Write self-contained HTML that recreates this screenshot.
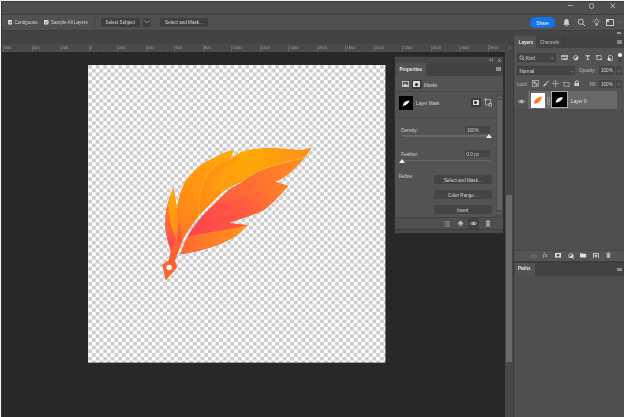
<!DOCTYPE html>
<html><head><meta charset="utf-8">
<style>
*{margin:0;padding:0;box-sizing:border-box}
html,body{width:624px;height:417px;overflow:hidden;background:#282828;font-family:"Liberation Sans",sans-serif;color:#ddd}
.a{position:absolute}
.t{position:absolute;font-size:4.6px;line-height:8px;white-space:nowrap;color:#d0d0d0}
.rl{position:absolute;top:46.4px;font-size:4px;line-height:4px;color:#a0a0a0;white-space:nowrap}
.btn{position:absolute;background:#3f3f3f;border-radius:1px;font-size:4.6px;line-height:9px;text-align:center;color:#d8d8d8;white-space:nowrap}
.ib{position:absolute;background:#d6d6d6}
#root{position:absolute;left:0;top:0;width:624px;height:417px;overflow:hidden;background:#282828;filter:blur(0.35px)}
</style></head><body><div id="root">
<!-- title bar -->
<div class="a" style="left:0;top:1px;width:624px;height:13px;background:#4e4e4e"></div>
<div class="a" style="left:0;top:14px;width:624px;height:1px;background:#3d3d3d"></div>
<!-- window controls -->
<div class="a" style="left:568px;top:5.3px;width:5.1px;height:1.2px;background:#a4a4a4"></div>
<div class="a" style="left:588.6px;top:3.1px;width:5.8px;height:5.6px;border:1.5px solid #b4b4b4;border-radius:2.6px"></div>
<svg class="a" style="left:610.3px;top:3px" width="5.6" height="5.6" viewBox="0 0 6 6"><path d="M0.5 0.5L5.5 5.5M5.5 0.5L0.5 5.5" stroke="#c8c8c8" stroke-width="1"/></svg>
<!-- options bar -->
<div class="a" style="left:0;top:15px;width:624px;height:15px;background:#505050"></div>
<div class="a" style="left:0;top:30px;width:624px;height:1px;background:#3d3d3d"></div>
<svg class="a" style="left:7.7px;top:20px" width="4.5" height="4.5" viewBox="0 0 9 9"><rect width="9" height="9" rx="1" fill="#dcdcdc"/><path d="M2 4.5L4 6.5L7.2 2.5" stroke="#444" stroke-width="1.4" fill="none"/></svg>
<div class="t" style="left:14.4px;top:19px">Contiguous</div>
<svg class="a" style="left:44px;top:20px" width="4.5" height="4.5" viewBox="0 0 9 9"><rect width="9" height="9" rx="1" fill="#dcdcdc"/><path d="M2 4.5L4 6.5L7.2 2.5" stroke="#444" stroke-width="1.4" fill="none"/></svg>
<div class="t" style="left:51px;top:19px">Sample All Layers</div>
<div class="a" style="left:94px;top:16px;width:1px;height:13px;background:#454545"></div>
<div class="btn" style="left:100.5px;top:17.6px;width:39.5px;height:9px">Select Subject</div>
<div class="btn" style="left:143px;top:17.6px;width:7.5px;height:9px"></div>
<svg class="a" style="left:143.8px;top:19.8px" width="6.2" height="3.6" viewBox="0 0 6.2 3.6"><path d="M0.5 0.6L3.1 3L5.7 0.6" stroke="#a8a8a8" stroke-width="0.8" fill="none"/></svg>
<div class="btn" style="left:160px;top:17.6px;width:48px;height:9px">Select and Mask...</div>
<!-- share & icons -->
<div class="a" style="left:530.3px;top:16.5px;width:24.7px;height:11.2px;background:#1473e6;border-radius:5.6px;color:#fff;font-size:4.8px;line-height:13px;text-align:center">Share</div>
<svg class="a" style="left:562px;top:18px" width="9" height="9" viewBox="0 0 9 9"><path d="M4.5 1C3 1 2.3 2.2 2.3 3.5L2.3 5.5L1.3 6.8L7.7 6.8L6.7 5.5L6.7 3.5C6.7 2.2 6 1 4.5 1Z" fill="#d0d0d0"/><rect x="3.6" y="7.2" width="1.8" height="1" fill="#d0d0d0"/></svg>
<svg class="a" style="left:576.5px;top:18px" width="9" height="9" viewBox="0 0 9 9"><circle cx="3.8" cy="3.8" r="2.6" stroke="#d0d0d0" stroke-width="0.9" fill="none"/><path d="M5.7 5.7L8 8" stroke="#d0d0d0" stroke-width="1"/></svg>
<svg class="a" style="left:592px;top:17px" width="9" height="10" viewBox="0 0 9 10"><path d="M4.5 2.5C3.3 2.5 2.6 3.4 2.6 4.4C2.6 5.3 3.3 5.8 3.5 6.6L5.5 6.6C5.7 5.8 6.4 5.3 6.4 4.4C6.4 3.4 5.7 2.5 4.5 2.5Z" stroke="#d0d0d0" stroke-width="0.7" fill="none"/><rect x="3.6" y="7" width="1.8" height="1.5" fill="#d8d8d8"/><path d="M4.5 0.5V1.6M1 2L1.8 2.7M8 2L7.2 2.7M0.3 4.6H1.4M7.6 4.6H8.7" stroke="#c0c0c0" stroke-width="0.5"/></svg>
<div class="a" style="left:606px;top:18.5px;width:8px;height:7px;border:1px solid #c8c8c8"></div>
<div class="a" style="left:607px;top:19.5px;width:2px;height:2px;background:#c8c8c8"></div>
<svg class="a" style="left:618px;top:20px" width="5" height="4" viewBox="0 0 5 4"><path d="M0.5 1L2.5 3L4.5 1" stroke="#888" stroke-width="0.7" fill="none"/></svg>
<!-- doc tab bar -->
<div class="a" style="left:0;top:31px;width:513px;height:13px;background:#434343"></div>
<!-- ruler -->
<div class="a" style="left:0;top:44px;width:505px;height:8px;background:#494949"></div>
<div class="a" style="left:3.2px;top:44.5px;width:0.8px;height:7.5px;background:#666666"></div>
<div class="rl" style="left:4.5px">600</div>
<div class="a" style="left:6.8px;top:50.3px;width:0.7px;height:1.2px;background:#5a5a5a"></div>
<div class="a" style="left:10.3px;top:50.3px;width:0.7px;height:1.2px;background:#5a5a5a"></div>
<div class="a" style="left:13.9px;top:50.3px;width:0.7px;height:1.2px;background:#5a5a5a"></div>
<div class="a" style="left:17.5px;top:49.5px;width:0.7px;height:2.0px;background:#5a5a5a"></div>
<div class="a" style="left:21.0px;top:50.3px;width:0.7px;height:1.2px;background:#5a5a5a"></div>
<div class="a" style="left:24.6px;top:50.3px;width:0.7px;height:1.2px;background:#5a5a5a"></div>
<div class="a" style="left:28.1px;top:50.3px;width:0.7px;height:1.2px;background:#5a5a5a"></div>
<div class="a" style="left:31.7px;top:44.5px;width:0.8px;height:7.5px;background:#666666"></div>
<div class="rl" style="left:33.0px">400</div>
<div class="a" style="left:35.3px;top:50.3px;width:0.7px;height:1.2px;background:#5a5a5a"></div>
<div class="a" style="left:38.8px;top:50.3px;width:0.7px;height:1.2px;background:#5a5a5a"></div>
<div class="a" style="left:42.4px;top:50.3px;width:0.7px;height:1.2px;background:#5a5a5a"></div>
<div class="a" style="left:46.0px;top:49.5px;width:0.7px;height:2.0px;background:#5a5a5a"></div>
<div class="a" style="left:49.5px;top:50.3px;width:0.7px;height:1.2px;background:#5a5a5a"></div>
<div class="a" style="left:53.1px;top:50.3px;width:0.7px;height:1.2px;background:#5a5a5a"></div>
<div class="a" style="left:56.6px;top:50.3px;width:0.7px;height:1.2px;background:#5a5a5a"></div>
<div class="a" style="left:60.2px;top:44.5px;width:0.8px;height:7.5px;background:#666666"></div>
<div class="rl" style="left:61.5px">200</div>
<div class="a" style="left:63.8px;top:50.3px;width:0.7px;height:1.2px;background:#5a5a5a"></div>
<div class="a" style="left:67.3px;top:50.3px;width:0.7px;height:1.2px;background:#5a5a5a"></div>
<div class="a" style="left:70.9px;top:50.3px;width:0.7px;height:1.2px;background:#5a5a5a"></div>
<div class="a" style="left:74.5px;top:49.5px;width:0.7px;height:2.0px;background:#5a5a5a"></div>
<div class="a" style="left:78.0px;top:50.3px;width:0.7px;height:1.2px;background:#5a5a5a"></div>
<div class="a" style="left:81.6px;top:50.3px;width:0.7px;height:1.2px;background:#5a5a5a"></div>
<div class="a" style="left:85.1px;top:50.3px;width:0.7px;height:1.2px;background:#5a5a5a"></div>
<div class="a" style="left:88.7px;top:44.5px;width:0.8px;height:7.5px;background:#666666"></div>
<div class="rl" style="left:90.0px">0</div>
<div class="a" style="left:92.3px;top:50.3px;width:0.7px;height:1.2px;background:#5a5a5a"></div>
<div class="a" style="left:95.8px;top:50.3px;width:0.7px;height:1.2px;background:#5a5a5a"></div>
<div class="a" style="left:99.4px;top:50.3px;width:0.7px;height:1.2px;background:#5a5a5a"></div>
<div class="a" style="left:103.0px;top:49.5px;width:0.7px;height:2.0px;background:#5a5a5a"></div>
<div class="a" style="left:106.5px;top:50.3px;width:0.7px;height:1.2px;background:#5a5a5a"></div>
<div class="a" style="left:110.1px;top:50.3px;width:0.7px;height:1.2px;background:#5a5a5a"></div>
<div class="a" style="left:113.6px;top:50.3px;width:0.7px;height:1.2px;background:#5a5a5a"></div>
<div class="a" style="left:117.2px;top:44.5px;width:0.8px;height:7.5px;background:#666666"></div>
<div class="rl" style="left:118.5px">200</div>
<div class="a" style="left:120.8px;top:50.3px;width:0.7px;height:1.2px;background:#5a5a5a"></div>
<div class="a" style="left:124.3px;top:50.3px;width:0.7px;height:1.2px;background:#5a5a5a"></div>
<div class="a" style="left:127.9px;top:50.3px;width:0.7px;height:1.2px;background:#5a5a5a"></div>
<div class="a" style="left:131.4px;top:49.5px;width:0.7px;height:2.0px;background:#5a5a5a"></div>
<div class="a" style="left:135.0px;top:50.3px;width:0.7px;height:1.2px;background:#5a5a5a"></div>
<div class="a" style="left:138.6px;top:50.3px;width:0.7px;height:1.2px;background:#5a5a5a"></div>
<div class="a" style="left:142.1px;top:50.3px;width:0.7px;height:1.2px;background:#5a5a5a"></div>
<div class="a" style="left:145.7px;top:44.5px;width:0.8px;height:7.5px;background:#666666"></div>
<div class="rl" style="left:147.0px">400</div>
<div class="a" style="left:149.3px;top:50.3px;width:0.7px;height:1.2px;background:#5a5a5a"></div>
<div class="a" style="left:152.8px;top:50.3px;width:0.7px;height:1.2px;background:#5a5a5a"></div>
<div class="a" style="left:156.4px;top:50.3px;width:0.7px;height:1.2px;background:#5a5a5a"></div>
<div class="a" style="left:159.9px;top:49.5px;width:0.7px;height:2.0px;background:#5a5a5a"></div>
<div class="a" style="left:163.5px;top:50.3px;width:0.7px;height:1.2px;background:#5a5a5a"></div>
<div class="a" style="left:167.1px;top:50.3px;width:0.7px;height:1.2px;background:#5a5a5a"></div>
<div class="a" style="left:170.6px;top:50.3px;width:0.7px;height:1.2px;background:#5a5a5a"></div>
<div class="a" style="left:174.2px;top:44.5px;width:0.8px;height:7.5px;background:#666666"></div>
<div class="rl" style="left:175.5px">600</div>
<div class="a" style="left:177.8px;top:50.3px;width:0.7px;height:1.2px;background:#5a5a5a"></div>
<div class="a" style="left:181.3px;top:50.3px;width:0.7px;height:1.2px;background:#5a5a5a"></div>
<div class="a" style="left:184.9px;top:50.3px;width:0.7px;height:1.2px;background:#5a5a5a"></div>
<div class="a" style="left:188.4px;top:49.5px;width:0.7px;height:2.0px;background:#5a5a5a"></div>
<div class="a" style="left:192.0px;top:50.3px;width:0.7px;height:1.2px;background:#5a5a5a"></div>
<div class="a" style="left:195.6px;top:50.3px;width:0.7px;height:1.2px;background:#5a5a5a"></div>
<div class="a" style="left:199.1px;top:50.3px;width:0.7px;height:1.2px;background:#5a5a5a"></div>
<div class="a" style="left:202.7px;top:44.5px;width:0.8px;height:7.5px;background:#666666"></div>
<div class="rl" style="left:204.0px">800</div>
<div class="a" style="left:206.3px;top:50.3px;width:0.7px;height:1.2px;background:#5a5a5a"></div>
<div class="a" style="left:209.8px;top:50.3px;width:0.7px;height:1.2px;background:#5a5a5a"></div>
<div class="a" style="left:213.4px;top:50.3px;width:0.7px;height:1.2px;background:#5a5a5a"></div>
<div class="a" style="left:216.9px;top:49.5px;width:0.7px;height:2.0px;background:#5a5a5a"></div>
<div class="a" style="left:220.5px;top:50.3px;width:0.7px;height:1.2px;background:#5a5a5a"></div>
<div class="a" style="left:224.1px;top:50.3px;width:0.7px;height:1.2px;background:#5a5a5a"></div>
<div class="a" style="left:227.6px;top:50.3px;width:0.7px;height:1.2px;background:#5a5a5a"></div>
<div class="a" style="left:231.2px;top:44.5px;width:0.8px;height:7.5px;background:#666666"></div>
<div class="rl" style="left:232.5px">1000</div>
<div class="a" style="left:234.8px;top:50.3px;width:0.7px;height:1.2px;background:#5a5a5a"></div>
<div class="a" style="left:238.3px;top:50.3px;width:0.7px;height:1.2px;background:#5a5a5a"></div>
<div class="a" style="left:241.9px;top:50.3px;width:0.7px;height:1.2px;background:#5a5a5a"></div>
<div class="a" style="left:245.4px;top:49.5px;width:0.7px;height:2.0px;background:#5a5a5a"></div>
<div class="a" style="left:249.0px;top:50.3px;width:0.7px;height:1.2px;background:#5a5a5a"></div>
<div class="a" style="left:252.6px;top:50.3px;width:0.7px;height:1.2px;background:#5a5a5a"></div>
<div class="a" style="left:256.1px;top:50.3px;width:0.7px;height:1.2px;background:#5a5a5a"></div>
<div class="a" style="left:259.7px;top:44.5px;width:0.8px;height:7.5px;background:#666666"></div>
<div class="rl" style="left:261.0px">1200</div>
<div class="a" style="left:263.3px;top:50.3px;width:0.7px;height:1.2px;background:#5a5a5a"></div>
<div class="a" style="left:266.8px;top:50.3px;width:0.7px;height:1.2px;background:#5a5a5a"></div>
<div class="a" style="left:270.4px;top:50.3px;width:0.7px;height:1.2px;background:#5a5a5a"></div>
<div class="a" style="left:273.9px;top:49.5px;width:0.7px;height:2.0px;background:#5a5a5a"></div>
<div class="a" style="left:277.5px;top:50.3px;width:0.7px;height:1.2px;background:#5a5a5a"></div>
<div class="a" style="left:281.1px;top:50.3px;width:0.7px;height:1.2px;background:#5a5a5a"></div>
<div class="a" style="left:284.6px;top:50.3px;width:0.7px;height:1.2px;background:#5a5a5a"></div>
<div class="a" style="left:288.2px;top:44.5px;width:0.8px;height:7.5px;background:#666666"></div>
<div class="rl" style="left:289.5px">1400</div>
<div class="a" style="left:291.8px;top:50.3px;width:0.7px;height:1.2px;background:#5a5a5a"></div>
<div class="a" style="left:295.3px;top:50.3px;width:0.7px;height:1.2px;background:#5a5a5a"></div>
<div class="a" style="left:298.9px;top:50.3px;width:0.7px;height:1.2px;background:#5a5a5a"></div>
<div class="a" style="left:302.4px;top:49.5px;width:0.7px;height:2.0px;background:#5a5a5a"></div>
<div class="a" style="left:306.0px;top:50.3px;width:0.7px;height:1.2px;background:#5a5a5a"></div>
<div class="a" style="left:309.6px;top:50.3px;width:0.7px;height:1.2px;background:#5a5a5a"></div>
<div class="a" style="left:313.1px;top:50.3px;width:0.7px;height:1.2px;background:#5a5a5a"></div>
<div class="a" style="left:316.7px;top:44.5px;width:0.8px;height:7.5px;background:#666666"></div>
<div class="rl" style="left:318.0px">1600</div>
<div class="a" style="left:320.3px;top:50.3px;width:0.7px;height:1.2px;background:#5a5a5a"></div>
<div class="a" style="left:323.8px;top:50.3px;width:0.7px;height:1.2px;background:#5a5a5a"></div>
<div class="a" style="left:327.4px;top:50.3px;width:0.7px;height:1.2px;background:#5a5a5a"></div>
<div class="a" style="left:330.9px;top:49.5px;width:0.7px;height:2.0px;background:#5a5a5a"></div>
<div class="a" style="left:334.5px;top:50.3px;width:0.7px;height:1.2px;background:#5a5a5a"></div>
<div class="a" style="left:338.1px;top:50.3px;width:0.7px;height:1.2px;background:#5a5a5a"></div>
<div class="a" style="left:341.6px;top:50.3px;width:0.7px;height:1.2px;background:#5a5a5a"></div>
<div class="a" style="left:345.2px;top:44.5px;width:0.8px;height:7.5px;background:#666666"></div>
<div class="rl" style="left:346.5px">1800</div>
<div class="a" style="left:348.8px;top:50.3px;width:0.7px;height:1.2px;background:#5a5a5a"></div>
<div class="a" style="left:352.3px;top:50.3px;width:0.7px;height:1.2px;background:#5a5a5a"></div>
<div class="a" style="left:355.9px;top:50.3px;width:0.7px;height:1.2px;background:#5a5a5a"></div>
<div class="a" style="left:359.4px;top:49.5px;width:0.7px;height:2.0px;background:#5a5a5a"></div>
<div class="a" style="left:363.0px;top:50.3px;width:0.7px;height:1.2px;background:#5a5a5a"></div>
<div class="a" style="left:366.6px;top:50.3px;width:0.7px;height:1.2px;background:#5a5a5a"></div>
<div class="a" style="left:370.1px;top:50.3px;width:0.7px;height:1.2px;background:#5a5a5a"></div>
<div class="a" style="left:373.7px;top:44.5px;width:0.8px;height:7.5px;background:#666666"></div>
<div class="rl" style="left:375.0px">2000</div>
<div class="a" style="left:377.3px;top:50.3px;width:0.7px;height:1.2px;background:#5a5a5a"></div>
<div class="a" style="left:380.8px;top:50.3px;width:0.7px;height:1.2px;background:#5a5a5a"></div>
<div class="a" style="left:384.4px;top:50.3px;width:0.7px;height:1.2px;background:#5a5a5a"></div>
<div class="a" style="left:387.9px;top:49.5px;width:0.7px;height:2.0px;background:#5a5a5a"></div>
<div class="a" style="left:391.5px;top:50.3px;width:0.7px;height:1.2px;background:#5a5a5a"></div>
<div class="a" style="left:395.1px;top:50.3px;width:0.7px;height:1.2px;background:#5a5a5a"></div>
<div class="a" style="left:398.6px;top:50.3px;width:0.7px;height:1.2px;background:#5a5a5a"></div>
<div class="a" style="left:402.2px;top:44.5px;width:0.8px;height:7.5px;background:#666666"></div>
<div class="rl" style="left:403.5px">2200</div>
<div class="a" style="left:405.8px;top:50.3px;width:0.7px;height:1.2px;background:#5a5a5a"></div>
<div class="a" style="left:409.3px;top:50.3px;width:0.7px;height:1.2px;background:#5a5a5a"></div>
<div class="a" style="left:412.9px;top:50.3px;width:0.7px;height:1.2px;background:#5a5a5a"></div>
<div class="a" style="left:416.4px;top:49.5px;width:0.7px;height:2.0px;background:#5a5a5a"></div>
<div class="a" style="left:420.0px;top:50.3px;width:0.7px;height:1.2px;background:#5a5a5a"></div>
<div class="a" style="left:423.6px;top:50.3px;width:0.7px;height:1.2px;background:#5a5a5a"></div>
<div class="a" style="left:427.1px;top:50.3px;width:0.7px;height:1.2px;background:#5a5a5a"></div>
<div class="a" style="left:430.7px;top:44.5px;width:0.8px;height:7.5px;background:#666666"></div>
<div class="rl" style="left:432.0px">2400</div>
<div class="a" style="left:434.3px;top:50.3px;width:0.7px;height:1.2px;background:#5a5a5a"></div>
<div class="a" style="left:437.8px;top:50.3px;width:0.7px;height:1.2px;background:#5a5a5a"></div>
<div class="a" style="left:441.4px;top:50.3px;width:0.7px;height:1.2px;background:#5a5a5a"></div>
<div class="a" style="left:444.9px;top:49.5px;width:0.7px;height:2.0px;background:#5a5a5a"></div>
<div class="a" style="left:448.5px;top:50.3px;width:0.7px;height:1.2px;background:#5a5a5a"></div>
<div class="a" style="left:452.1px;top:50.3px;width:0.7px;height:1.2px;background:#5a5a5a"></div>
<div class="a" style="left:455.6px;top:50.3px;width:0.7px;height:1.2px;background:#5a5a5a"></div>
<div class="a" style="left:459.2px;top:44.5px;width:0.8px;height:7.5px;background:#666666"></div>
<div class="rl" style="left:460.5px">2600</div>
<div class="a" style="left:462.8px;top:50.3px;width:0.7px;height:1.2px;background:#5a5a5a"></div>
<div class="a" style="left:466.3px;top:50.3px;width:0.7px;height:1.2px;background:#5a5a5a"></div>
<div class="a" style="left:469.9px;top:50.3px;width:0.7px;height:1.2px;background:#5a5a5a"></div>
<div class="a" style="left:473.4px;top:49.5px;width:0.7px;height:2.0px;background:#5a5a5a"></div>
<div class="a" style="left:477.0px;top:50.3px;width:0.7px;height:1.2px;background:#5a5a5a"></div>
<div class="a" style="left:480.6px;top:50.3px;width:0.7px;height:1.2px;background:#5a5a5a"></div>
<div class="a" style="left:484.1px;top:50.3px;width:0.7px;height:1.2px;background:#5a5a5a"></div>
<div class="a" style="left:487.7px;top:44.5px;width:0.8px;height:7.5px;background:#666666"></div>
<div class="rl" style="left:489.0px">2800</div>
<div class="a" style="left:491.3px;top:50.3px;width:0.7px;height:1.2px;background:#5a5a5a"></div>
<div class="a" style="left:494.8px;top:50.3px;width:0.7px;height:1.2px;background:#5a5a5a"></div>
<div class="a" style="left:498.4px;top:50.3px;width:0.7px;height:1.2px;background:#5a5a5a"></div>
<div class="a" style="left:501.9px;top:49.5px;width:0.7px;height:2.0px;background:#5a5a5a"></div>
<!-- canvas bg -->
<div class="a" style="left:0;top:52px;width:505px;height:365px;background:#282828"></div>
<!-- checker canvas -->
<svg class="a" style="left:88.4px;top:65.2px" width="297.4" height="297.6" viewBox="0 0 297.4 297.6">
<defs><pattern id="ck" width="7.48" height="7.48" patternUnits="userSpaceOnUse" patternTransform="translate(0.3 0.1)"><rect width="7.48" height="7.48" fill="#fff"/><rect width="3.74" height="3.74" fill="#cccccc"/><rect x="3.74" y="3.74" width="3.74" height="3.74" fill="#cccccc"/></pattern></defs>
<rect width="297.4" height="297.6" fill="url(#ck)"/>
</svg>
<!-- feather -->
<svg class="a" style="left:0;top:0" width="624" height="417" viewBox="0 0 624 417">
<defs>
<linearGradient id="gS" x1="172" y1="255" x2="238" y2="150" gradientUnits="userSpaceOnUse"><stop offset="0" stop-color="#ff6a32"/><stop offset="0.4" stop-color="#ff8c16"/><stop offset="0.75" stop-color="#ff9e0c"/><stop offset="1" stop-color="#ffae04"/></linearGradient>
<radialGradient id="gT" cx="242" cy="150" r="72" gradientUnits="userSpaceOnUse"><stop offset="0" stop-color="#ffac04"/><stop offset="0.45" stop-color="#ffa00c"/><stop offset="1" stop-color="#ff8c1a"/></radialGradient>
<linearGradient id="gL" x1="200" y1="232" x2="290" y2="186" gradientUnits="userSpaceOnUse"><stop offset="0" stop-color="#ff464c"/><stop offset="0.5" stop-color="#ff5a40"/><stop offset="1" stop-color="#ff8a20"/></linearGradient>
<linearGradient id="gU" x1="215" y1="200" x2="300" y2="165" gradientUnits="userSpaceOnUse"><stop offset="0" stop-color="#ff5a3e"/><stop offset="0.5" stop-color="#ff7230"/><stop offset="1" stop-color="#ff8a22"/></linearGradient>
<linearGradient id="gB" x1="185" y1="250" x2="248" y2="226" gradientUnits="userSpaceOnUse"><stop offset="0" stop-color="#ff6a32"/><stop offset="1" stop-color="#ff9a16"/></linearGradient>
<linearGradient id="gK" x1="172" y1="195" x2="170" y2="250" gradientUnits="userSpaceOnUse"><stop offset="0" stop-color="#ff8a20"/><stop offset="0.5" stop-color="#ff6a36"/><stop offset="1" stop-color="#ff4252"/></linearGradient>
<linearGradient id="gKi" x1="173" y1="190" x2="176" y2="240" gradientUnits="userSpaceOnUse"><stop offset="0" stop-color="#ffa806"/><stop offset="0.6" stop-color="#ff9a12"/><stop offset="1" stop-color="#ff8a1c"/></linearGradient>
<mask id="gapm" maskUnits="userSpaceOnUse" x="0" y="0" width="624" height="417"><rect width="624" height="417" fill="#fff"/><path d="M179.38 256.41 L179.45 256.22 L179.52 256.01 L179.61 255.76 L179.70 255.48 L179.81 255.18 L179.92 254.85 L180.04 254.49 L180.17 254.12 L180.31 253.72 L180.46 253.31 L180.61 252.87 L180.78 252.42 L180.95 251.95 L181.11 251.46 L181.29 250.96 L181.46 250.45 L181.64 249.92 L181.84 249.37 L182.04 248.79 L182.26 248.19 L182.50 247.57 L182.76 246.91 L183.04 246.22 L183.35 245.49 L183.69 244.71 L184.06 243.86 L184.45 242.96 L184.86 242.02 L185.29 241.06 L185.73 240.08 L186.19 239.10 L186.65 238.11 L187.13 237.15 L187.61 236.20 L188.10 235.29 L188.58 234.42 L189.07 233.59 L189.57 232.78 L190.08 231.99 L190.59 231.22 L191.12 230.45 L191.66 229.69 L192.21 228.93 L192.78 228.16 L193.36 227.38 L193.95 226.59 L194.57 225.79 L195.20 224.96 L195.84 224.10 L196.51 223.23 L197.20 222.34 L197.91 221.44 L198.62 220.53 L199.35 219.62 L200.08 218.72 L200.82 217.82 L201.55 216.94 L202.29 216.08 L203.01 215.24 L203.73 214.44 L204.44 213.67 L205.15 212.92 L205.86 212.19 L206.58 211.47 L207.30 210.77 L208.02 210.07 L208.75 209.38 L209.47 208.69 L210.20 208.00 L210.93 207.31 L211.65 206.60 L212.38 205.89 L213.10 205.17 L213.82 204.44 L214.54 203.71 L215.26 202.98 L215.97 202.25 L216.68 201.53 L217.39 200.81 L218.10 200.10 L218.79 199.41 L219.49 198.72 L220.18 198.06 L220.86 197.41 L221.54 196.77 L222.23 196.13 L222.91 195.50 L223.58 194.87 L224.24 194.24 L224.87 193.61 L225.51 193.00 L226.13 192.40 L226.75 191.83 L227.36 191.27 L227.97 190.75 L228.56 190.25 L229.14 189.78 L229.71 189.33 L230.28 188.91 L230.85 188.52 L231.40 188.14 L231.96 187.77 L232.51 187.42 L233.06 187.08 L233.61 186.75 L234.16 186.42 L234.70 186.10 L235.25 185.78 L235.81 185.46 L236.39 185.14 L237.00 184.82 L237.61 184.51 L238.22 184.20 L238.82 183.91 L239.40 183.63 L239.94 183.37 L240.44 183.13 L240.89 182.92 L241.27 182.73 L241.58 182.58 L241.42 182.22 L241.10 182.34 L240.71 182.48 L240.24 182.65 L239.72 182.84 L239.16 183.05 L238.55 183.27 L237.92 183.51 L237.28 183.75 L236.63 184.01 L235.98 184.28 L235.35 184.55 L234.75 184.82 L234.17 185.09 L233.59 185.36 L233.01 185.64 L232.42 185.92 L231.83 186.21 L231.23 186.52 L230.62 186.84 L230.01 187.17 L229.38 187.53 L228.75 187.91 L228.10 188.32 L227.44 188.75 L226.77 189.21 L226.10 189.70 L225.41 190.21 L224.72 190.74 L224.02 191.29 L223.31 191.85 L222.60 192.43 L221.90 193.03 L221.21 193.66 L220.52 194.30 L219.83 194.94 L219.14 195.59 L218.44 196.25 L217.74 196.93 L217.04 197.63 L216.33 198.34 L215.62 199.05 L214.90 199.77 L214.19 200.50 L213.47 201.23 L212.76 201.96 L212.05 202.68 L211.33 203.40 L210.62 204.11 L209.91 204.81 L209.19 205.50 L208.47 206.19 L207.75 206.88 L207.02 207.57 L206.29 208.27 L205.56 208.97 L204.82 209.69 L204.08 210.43 L203.35 211.18 L202.61 211.96 L201.87 212.76 L201.13 213.59 L200.39 214.45 L199.64 215.33 L198.89 216.22 L198.14 217.14 L197.40 218.05 L196.66 218.98 L195.94 219.89 L195.23 220.81 L194.53 221.71 L193.86 222.59 L193.20 223.44 L192.57 224.27 L191.96 225.09 L191.36 225.88 L190.77 226.67 L190.19 227.45 L189.63 228.24 L189.07 229.02 L188.52 229.82 L187.99 230.63 L187.46 231.45 L186.93 232.30 L186.42 233.18 L185.90 234.09 L185.40 235.05 L184.90 236.03 L184.40 237.03 L183.92 238.03 L183.46 239.04 L183.01 240.04 L182.57 241.01 L182.16 241.96 L181.76 242.86 L181.40 243.71 L181.05 244.51 L180.73 245.26 L180.44 245.98 L180.17 246.66 L179.92 247.32 L179.69 247.94 L179.48 248.53 L179.28 249.10 L179.09 249.64 L178.92 250.16 L178.75 250.65 L178.59 251.12 L178.42 251.58 L178.26 252.03 L178.10 252.47 L177.95 252.89 L177.81 253.29 L177.68 253.67 L177.56 254.03 L177.44 254.36 L177.34 254.67 L177.24 254.95 L177.16 255.19 L177.08 255.41 L177.02 255.59Z" fill="#000"/></mask>
<clipPath id="trlclip"><path d="M230.0 159.6 C231.3 158.7 235.2 155.4 238.0 153.9 C240.8 152.4 242.8 151.2 246.6 150.3 C250.4 149.4 256.2 148.8 261.0 148.4 C265.8 148.1 270.7 148.0 275.5 148.2 C280.3 148.3 285.7 149.0 290.0 149.3 C294.3 149.6 297.9 150.2 301.5 150.0 C305.1 149.8 309.9 148.2 311.6 147.8 C310.9 148.8 308.5 152.3 307.3 153.9 C306.1 155.5 305.0 156.7 304.5 157.3 C303.2 157.7 300.6 158.7 297.0 159.6 C293.4 160.5 288.7 161.1 282.7 162.8 C276.7 164.5 267.0 167.2 261.0 169.7 C255.0 172.2 249.8 175.9 246.6 178.0 C243.3 180.1 244.6 180.5 241.5 182.4 C238.4 184.3 231.6 187.2 228.0 189.5 C224.4 191.8 223.0 193.8 220.0 196.5 C217.0 199.2 213.6 202.4 210.0 206.0 C206.4 209.6 200.4 216.0 198.5 218.0 C198.5 216.2 198.2 211.2 198.5 207.0 C198.8 202.8 198.9 197.7 200.0 193.0 C201.1 188.3 203.0 183.0 205.0 179.0 C207.0 175.0 209.5 171.8 212.0 169.0 C214.5 166.2 217.0 163.6 220.0 162.0 C223.0 160.4 228.3 160.0 230.0 159.6Z"/></clipPath>
<filter id="fb" x="-20%" y="-20%" width="140%" height="140%"><feGaussianBlur stdDeviation="2"/></filter>
</defs>
<g mask="url(#gapm)">
<path d="M311.6 147.8 C310.9 148.8 309.2 151.5 307.3 153.9 C305.4 156.3 302.9 159.4 300.0 162.5 C297.1 165.6 293.2 169.8 290.0 172.6 C286.8 175.3 283.5 177.5 281.0 179.0 C278.5 180.5 275.9 181.3 274.9 181.8 C277.1 182.5 286.1 185.4 288.4 186.1 C287.3 187.2 284.7 190.2 282.0 193.0 C279.3 195.8 275.7 199.8 272.0 203.0 C268.3 206.2 267.2 208.7 260.0 212.0 C252.8 215.3 234.2 221.2 229.0 223.0 C232.1 223.4 244.6 224.8 247.7 225.2 C245.6 227.0 240.3 232.8 235.4 236.0 C230.5 239.2 224.2 242.2 218.2 244.6 C212.2 247.0 205.8 248.8 199.5 250.4 C193.2 252.0 183.3 253.7 180.1 254.3 C179.4 254.0 176.7 252.8 176.0 252.5 C175.2 252.2 171.8 251.1 170.9 250.8 C170.4 249.2 168.9 245.0 168.0 241.5 C167.1 238.0 166.0 233.5 165.6 230.0 C165.2 226.5 165.2 223.8 165.4 220.3 C165.6 216.8 165.8 212.4 166.5 208.8 C167.2 205.2 168.3 202.1 169.4 198.7 C170.5 195.2 172.7 189.9 173.3 188.1 C173.6 189.7 174.4 193.8 175.0 197.5 C175.6 201.2 176.5 207.9 176.8 210.0 C177.0 208.6 177.3 204.9 178.0 201.8 C178.7 198.8 179.6 195.0 180.8 191.7 C182.0 188.3 183.2 184.8 185.1 181.7 C187.0 178.6 189.7 175.8 192.3 173.0 C195.0 170.2 197.6 167.5 201.0 165.1 C204.4 162.7 208.4 160.8 212.5 158.6 C216.6 156.4 222.2 153.3 225.8 151.9 C229.4 150.5 232.9 150.4 234.3 150.1 C233.6 151.7 230.7 158.0 230.0 159.6 C231.3 158.7 235.2 155.4 238.0 153.9 C240.8 152.4 242.8 151.2 246.6 150.3 C250.4 149.4 256.2 148.8 261.0 148.4 C265.8 148.1 270.7 148.0 275.5 148.2 C280.3 148.3 285.7 149.0 290.0 149.3 C294.3 149.6 297.9 150.2 301.5 150.0 C305.1 149.8 309.9 148.2 311.6 147.8Z" fill="url(#gS)"/>
<path d="M230.0 159.6 C231.3 158.7 235.2 155.4 238.0 153.9 C240.8 152.4 242.8 151.2 246.6 150.3 C250.4 149.4 256.2 148.8 261.0 148.4 C265.8 148.1 270.7 148.0 275.5 148.2 C280.3 148.3 285.7 149.0 290.0 149.3 C294.3 149.6 297.9 150.2 301.5 150.0 C305.1 149.8 309.9 148.2 311.6 147.8 C310.9 148.8 308.5 152.3 307.3 153.9 C306.1 155.5 305.0 156.7 304.5 157.3 C303.2 157.7 300.6 158.7 297.0 159.6 C293.4 160.5 288.7 161.1 282.7 162.8 C276.7 164.5 267.0 167.2 261.0 169.7 C255.0 172.2 249.8 175.9 246.6 178.0 C243.3 180.1 244.6 180.5 241.5 182.4 C238.4 184.3 231.6 187.2 228.0 189.5 C224.4 191.8 223.0 193.8 220.0 196.5 C217.0 199.2 213.6 202.4 210.0 206.0 C206.4 209.6 200.4 216.0 198.5 218.0 C198.5 216.2 198.2 211.2 198.5 207.0 C198.8 202.8 198.9 197.7 200.0 193.0 C201.1 188.3 203.0 183.0 205.0 179.0 C207.0 175.0 209.5 171.8 212.0 169.0 C214.5 166.2 217.0 163.6 220.0 162.0 C223.0 160.4 228.3 160.0 230.0 159.6Z" fill="url(#gT)"/>
<g clip-path="url(#trlclip)"><path d="M236.0 158.0 C234.0 159.0 227.5 161.8 224.0 164.0 C220.5 166.2 217.6 168.2 215.0 171.0 C212.4 173.8 210.2 177.2 208.5 181.0 C206.8 184.8 205.4 189.7 204.5 194.0 C203.6 198.3 203.2 202.7 203.0 207.0 C202.8 211.3 203.0 217.8 203.0 220.0" stroke="#ff8a12" stroke-width="7" fill="none" opacity="0.55" filter="url(#fb)"/></g>
<path d="M230.0 159.6 C228.3 160.0 223.0 160.4 220.0 162.0 C217.0 163.6 214.5 166.2 212.0 169.0 C209.5 171.8 207.0 175.0 205.0 179.0 C203.0 183.0 201.1 188.3 200.0 193.0 C198.9 197.7 198.8 202.8 198.5 207.0 C198.2 211.2 198.5 216.2 198.5 218.0" stroke="#ffb422" stroke-width="0.9" fill="none" opacity="0.8"/>
<path d="M173.3 188.1 C173.6 189.7 174.4 193.8 175.0 197.5 C175.6 201.2 176.1 205.9 176.8 210.0 C177.5 214.1 178.4 217.8 179.3 222.0 C180.2 226.2 181.8 232.8 182.3 235.0 C181.6 236.8 178.7 244.2 178.0 246.0 C176.8 246.8 172.1 250.0 170.9 250.8 C170.4 249.2 168.9 245.0 168.0 241.5 C167.1 238.0 166.0 233.5 165.6 230.0 C165.2 226.5 165.2 223.8 165.4 220.3 C165.6 216.8 165.8 212.4 166.5 208.8 C167.2 205.2 168.3 202.1 169.4 198.7 C170.5 195.2 172.7 189.9 173.3 188.1Z" fill="url(#gK)"/>
<path d="M173.3 188.1 C173.6 189.7 174.4 193.8 175.0 197.5 C175.6 201.2 176.3 205.4 176.8 210.0 C177.3 214.6 178.0 219.8 178.0 225.0 C178.0 230.2 177.2 238.3 177.0 241.0 C176.1 238.7 173.1 232.0 171.7 227.0 C170.3 222.0 168.9 215.8 168.6 211.0 C168.2 206.2 168.8 201.8 169.6 198.0 C170.4 194.2 172.7 189.8 173.3 188.1Z" fill="url(#gKi)"/>
<path d="M180.1 254.3 C180.4 252.8 181.0 248.4 182.2 245.0 C183.4 241.6 185.5 237.3 187.5 233.8 C189.5 230.3 191.6 227.6 194.2 224.2 C196.8 220.8 199.9 216.8 202.8 213.6 C205.7 210.4 208.6 207.8 211.5 205.0 C214.4 202.2 217.2 199.1 220.0 196.5 C222.8 193.9 225.5 191.4 228.0 189.5 C230.5 187.6 232.8 186.5 235.0 185.3 C237.2 184.1 239.6 183.6 241.5 182.4 C243.4 181.2 243.3 180.1 246.6 178.0 C249.8 175.9 255.0 172.2 261.0 169.7 C267.0 167.2 276.7 164.5 282.7 162.8 C288.7 161.1 293.4 160.5 297.0 159.6 C300.6 158.7 303.2 157.7 304.5 157.3 C303.8 158.2 302.4 159.9 300.0 162.5 C297.6 165.1 293.2 169.8 290.0 172.6 C286.8 175.3 283.5 177.5 281.0 179.0 C278.5 180.5 275.9 181.3 274.9 181.8 C277.1 182.5 286.1 185.4 288.4 186.1 C287.3 187.2 284.7 190.2 282.0 193.0 C279.3 195.8 275.7 199.8 272.0 203.0 C268.3 206.2 267.2 208.7 260.0 212.0 C252.8 215.3 234.2 221.2 229.0 223.0 C232.1 223.4 244.6 224.8 247.7 225.2 C245.6 227.0 240.3 232.8 235.4 236.0 C230.5 239.2 224.2 242.2 218.2 244.6 C212.2 247.0 205.8 248.8 199.5 250.4 C193.2 252.0 183.3 253.7 180.1 254.3Z" fill="url(#gL)"/>
<path d="M211.5 205.0 C212.9 203.6 217.2 199.1 220.0 196.5 C222.8 193.9 225.5 191.4 228.0 189.5 C230.5 187.6 232.8 186.5 235.0 185.3 C237.2 184.1 239.6 183.6 241.5 182.4 C243.4 181.2 243.3 180.1 246.6 178.0 C249.8 175.9 255.0 172.2 261.0 169.7 C267.0 167.2 276.7 164.5 282.7 162.8 C288.7 161.1 293.4 160.5 297.0 159.6 C300.6 158.7 303.2 157.7 304.5 157.3 C303.8 158.2 302.4 159.9 300.0 162.5 C297.6 165.1 293.2 169.8 290.0 172.6 C286.8 175.3 283.5 177.5 281.0 179.0 C278.5 180.5 275.9 181.3 274.9 181.8 C277.1 182.5 286.1 185.4 288.4 186.1 C286.2 186.6 279.7 187.9 275.0 189.0 C270.3 190.1 265.8 191.0 260.0 192.5 C254.2 194.0 245.8 196.4 240.0 198.0 C234.2 199.6 229.8 200.8 225.0 202.0 C220.2 203.2 213.8 204.5 211.5 205.0Z" fill="url(#gU)"/>
<path d="M247.7 225.2 C245.6 227.0 240.3 232.8 235.4 236.0 C230.5 239.2 224.2 242.2 218.2 244.6 C212.2 247.0 205.8 248.8 199.5 250.4 C193.2 252.0 183.3 253.7 180.1 254.3 C180.4 252.8 181.1 247.9 182.2 245.0 C183.3 242.1 185.8 238.3 186.5 237.0 C188.8 236.5 194.8 235.0 200.0 234.0 C205.2 233.0 212.2 232.0 218.0 231.0 C223.8 230.0 230.1 229.0 235.0 228.0 C239.9 227.0 245.6 225.7 247.7 225.2Z" fill="url(#gB)"/>
<path d="M182.8 239.0 C182.1 241.2 179.9 248.4 178.6 252.0 C177.3 255.6 175.6 258.9 175.0 260.3 C175.4 261.5 176.8 266.3 177.2 267.5 C175.3 269.7 167.5 278.3 165.6 280.5 C165.1 277.9 162.9 267.4 162.3 264.8 C163.4 264.0 167.7 260.8 168.8 260.0 C169.2 258.5 169.7 254.0 170.9 250.8 C172.1 247.6 175.2 242.6 176.0 241.0 C177.1 240.7 181.7 239.3 182.8 239.0Z" fill="#ff6430"/>
<circle cx="169.2" cy="267.6" r="2.75" fill="#fafafa"/>
<path d="M241.5 182.4 C242.3 181.7 243.3 180.1 246.6 178.0 C249.8 175.9 255.0 172.2 261.0 169.7 C267.0 167.2 276.7 164.5 282.7 162.8 C288.7 161.1 293.4 160.5 297.0 159.6 C300.6 158.7 303.2 157.7 304.5 157.3" stroke="#ffb02a" stroke-width="1.2" fill="none"/>
</g>
</svg>
<!-- canvas vertical scrollbar -->
<div class="a" style="left:505px;top:44px;width:8px;height:373px;background:#474747"></div>
<svg class="a" style="left:507px;top:46px" width="5" height="4" viewBox="0 0 5 4"><path d="M0.5 3L2.5 1L4.5 3" stroke="#777" stroke-width="0.7" fill="none"/></svg>
<div class="a" style="left:506px;top:195px;width:6px;height:167px;background:#6a6a6a"></div>
<!-- properties panel -->
<div class="a" style="left:393.6px;top:56px;width:111.4px;height:178.2px;background:#2e2e2e"></div>
<div class="a" style="left:395px;top:57px;width:108px;height:6px;background:#474747"></div>
<svg class="a" style="left:488.8px;top:58.3px" width="4.4" height="3.6" viewBox="0 0 7 5.6"><path d="M3.2 0.5L0.8 2.8L3.2 5.1M6.4 0.5L4 2.8L6.4 5.1" stroke="#b4b4b4" stroke-width="1.2" fill="none"/></svg>
<svg class="a" style="left:497.8px;top:58.6px" width="3.2" height="3.2" viewBox="0 0 4 4"><path d="M0.5 0.5L3.5 3.5M3.5 0.5L0.5 3.5" stroke="#c4c4c4" stroke-width="0.9"/></svg>
<div class="a" style="left:395px;top:63px;width:108px;height:13px;background:#434343"></div>
<div class="a" style="left:395.8px;top:63px;width:30.2px;height:13px;background:#535353"></div>
<div class="t" style="left:399.4px;top:66px;font-weight:bold;color:#e8e8e8">Properties</div>
<div class="a" style="left:496px;top:67px;width:5px;height:4px;background:#8e8e8e"></div>
<div class="a" style="left:395px;top:76px;width:108px;height:141px;background:#535353"></div>
<!-- masks row -->
<svg class="a" style="left:402px;top:80.8px" width="7" height="6" viewBox="0 0 14 12"><rect x="0" y="0" width="14" height="12" fill="#d4d4d4"/><rect x="1.5" y="1.5" width="11" height="9" fill="#5a5a5a"/><path d="M1.5 10.5L5.5 5L8.5 8L10 6.5L12.5 10.5Z" fill="#d4d4d4"/></svg>
<div class="a" style="left:411.5px;top:79.5px;width:10px;height:9.5px;background:#3a3a3a;border-radius:1px"></div>
<div class="a" style="left:413.3px;top:81.3px;width:6.5px;height:5.5px;background:#d8d8d8"></div>
<div class="a" style="left:415px;top:82.5px;width:3.1px;height:3.1px;background:#2a2a2a;border-radius:50%"></div>
<div class="t" style="left:424.1px;top:82px">Masks</div>
<div class="a" style="left:395px;top:91px;width:108px;height:1px;background:#474747"></div>
<!-- layer mask row -->
<div class="a" style="left:398.9px;top:95.8px;width:14.1px;height:14.3px;background:#000"></div>
<svg class="a" style="left:398.9px;top:95.9px" width="14" height="14" viewBox="0 0 14 14"><path d="M4 9.7C4 6.9 6.8 4.6 10.5 4.5C9.9 7.3 7.3 9.4 4 9.7Z" fill="#fff"/><path d="M3.3 10.6L4.8 9.1" stroke="#ddd" stroke-width="0.6"/></svg>
<div class="t" style="left:415.9px;top:100px">Layer Mask</div>
<div class="a" style="left:470.9px;top:98px;width:10px;height:9.4px;background:#3a3a3a;border-radius:1px"></div>
<div class="a" style="left:472.6px;top:99.9px;width:6.6px;height:5.6px;background:#d8d8d8"></div>
<div class="a" style="left:474.4px;top:101.2px;width:3.1px;height:3.1px;background:#2a2a2a;border-radius:50%"></div>
<svg class="a" style="left:483.5px;top:98px" width="8" height="9" viewBox="0 0 8 9"><rect x="0.5" y="0.5" width="2" height="2" fill="#ccc"/><rect x="5" y="5.5" width="2.5" height="2.5" fill="none" stroke="#ccc" stroke-width="0.7"/><path d="M1.5 2.5V7H5M2.5 1.5H6.5V5.5" stroke="#ccc" stroke-width="0.6" fill="none"/></svg>
<!-- prop scrollbar -->
<div class="a" style="left:496px;top:93.7px;width:6.5px;height:123px;background:#4a4a4a"></div>
<div class="a" style="left:497px;top:100px;width:4.5px;height:110px;background:#626262"></div>
<svg class="a" style="left:497.3px;top:95.5px" width="5" height="3" viewBox="0 0 5 3"><path d="M0.5 2.5L2.5 0.7L4.5 2.5" stroke="#aaa" stroke-width="0.6" fill="none"/></svg>
<svg class="a" style="left:497.3px;top:211.5px" width="5" height="3" viewBox="0 0 5 3"><path d="M0.5 0.5L2.5 2.3L4.5 0.5" stroke="#999" stroke-width="0.6" fill="none"/></svg>
<div class="a" style="left:395px;top:117px;width:101px;height:1px;background:#4a4a4a"></div>
<!-- density -->
<div class="t" style="left:401.2px;top:127px">Density:</div>
<div class="a" style="left:465.1px;top:125.7px;width:24.5px;height:7.2px;background:#454545"></div>
<div class="t" style="left:467px;top:126.5px">100%</div>
<div class="a" style="left:402.2px;top:135.2px;width:88px;height:1.6px;background:#686868"></div>
<svg class="a" style="left:485.8px;top:134.3px" width="6" height="4" viewBox="0 0 6 4"><path d="M3 0L6 4H0Z" fill="#f0f0f0"/></svg>
<!-- feather -->
<div class="t" style="left:401.2px;top:151px">Feather:</div>
<div class="a" style="left:465.1px;top:150.1px;width:24.5px;height:7.2px;background:#454545"></div>
<div class="t" style="left:466.5px;top:151px">0.0 px</div>
<div class="a" style="left:402.2px;top:159.8px;width:88px;height:1.6px;background:#686868"></div>
<svg class="a" style="left:398.5px;top:158.8px" width="6" height="4" viewBox="0 0 6 4"><path d="M3 0L6 4H0Z" fill="#f0f0f0"/></svg>
<!-- refine -->
<div class="t" style="left:398.7px;top:173px">Refine:</div>
<div class="btn" style="left:434px;top:174.7px;width:57.8px;height:9.3px;line-height:11.8px;background:#444">Select and Mask...</div>
<div class="btn" style="left:434px;top:189.8px;width:57.8px;height:9.3px;line-height:11.8px;background:#444">Color Range...</div>
<div class="btn" style="left:434px;top:204.6px;width:57.8px;height:9.3px;line-height:11.8px;background:#444">Invert</div>
<!-- prop footer -->
<div class="a" style="left:395px;top:217px;width:108px;height:12.2px;background:#4f4f4f"></div>
<div class="a" style="left:395px;top:229.2px;width:108px;height:0.7px;background:#3c3c3c"></div>
<div class="a" style="left:395px;top:229.9px;width:108px;height:3.1px;background:#494949"></div>
<div class="a" style="left:395px;top:217px;width:108px;height:0.8px;background:#444"></div>
<svg class="a" style="left:444px;top:220.5px" width="6" height="6" viewBox="0 0 6 6"><path d="M0.5 0.8H1.5M2.5 0.8H5.5M0.5 3H1.5M2.5 3H5.5M0.5 5.2H1.5M2.5 5.2H5.5" stroke="#c8c8c8" stroke-width="0.8"/></svg>
<svg class="a" style="left:457px;top:220px" width="7" height="7" viewBox="0 0 7 7"><path d="M3.5 0.5L6.5 3.5L3.5 6.5L0.5 3.5Z" fill="#bbb"/><path d="M1.5 3.5L3.5 5.5L5.5 3.5" stroke="#555" stroke-width="0.6" fill="none"/></svg>
<div class="a" style="left:467.7px;top:217.8px;width:11.3px;height:11.5px;background:#414141"></div>
<svg class="a" style="left:470px;top:221px" width="7" height="5" viewBox="0 0 7 5"><path d="M0.3 2.5C1.5 0.8 5.5 0.8 6.7 2.5C5.5 4.2 1.5 4.2 0.3 2.5Z" stroke="#ddd" stroke-width="0.7" fill="none"/><circle cx="3.5" cy="2.5" r="1" fill="#ddd"/></svg>
<svg class="a" style="left:484.5px;top:220px" width="6" height="7" viewBox="0 0 6 7"><rect x="0.3" y="1" width="5.4" height="0.8" fill="#aaa"/><rect x="1" y="2.2" width="4" height="4.5" fill="#999"/><rect x="2" y="0.2" width="2" height="0.8" fill="#aaa"/></svg>

<!-- right dock -->
<div class="a" style="left:513px;top:31px;width:111px;height:386px;background:#535353"></div>
<div class="a" style="left:513px;top:31px;width:1.3px;height:386px;background:#3a3a3a"></div>
<div class="a" style="left:514.3px;top:31px;width:110px;height:5px;background:#474747"></div>
<div class="a" style="left:617.4px;top:31.8px;width:4px;height:2.2px;background:#9a9a9a"></div>
<!-- layers tab bar -->
<div class="a" style="left:514.3px;top:36px;width:110px;height:12.3px;background:#434343"></div>
<div class="a" style="left:514.3px;top:36px;width:21.7px;height:12.3px;background:#535353"></div>
<div class="t" style="left:518.6px;top:39.3px;font-weight:bold;color:#eaeaea">Layers</div>
<div class="t" style="left:540px;top:39.3px;color:#bdbdbd">Channels</div>
<div class="a" style="left:564px;top:36px;width:0.8px;height:12.3px;background:#3b3b3b"></div>
<div class="a" style="left:616.8px;top:39.8px;width:5.2px;height:4px;background:#878787"></div>
<!-- kind row -->
<div class="a" style="left:516.8px;top:53px;width:39.3px;height:9.1px;background:#454545;border:0.7px solid #3e3e3e"></div>
<svg class="a" style="left:518.5px;top:55px" width="6" height="6" viewBox="0 0 6 6"><circle cx="2.5" cy="2.5" r="1.7" stroke="#ddd" stroke-width="0.7" fill="none"/><path d="M3.8 3.8L5.5 5.5" stroke="#ddd" stroke-width="0.8"/></svg>
<div class="t" style="left:525.5px;top:54.8px;color:#d8d8d8">Kind</div>
<svg class="a" style="left:550px;top:57px" width="4" height="3" viewBox="0 0 4 3"><path d="M0.3 0.5L2 2.3L3.7 0.5" stroke="#aaa" stroke-width="0.5" fill="none"/></svg>
<svg class="a" style="left:561.1px;top:55.2px" width="7.2" height="5" viewBox="0 0 8 6"><rect x="0.5" y="0.5" width="7" height="5" fill="none" stroke="#cfcfcf" stroke-width="0.9"/><rect x="1.2" y="1.2" width="5.6" height="1.1" fill="#bbb"/><path d="M1.5 5L3.5 3.2L5 4.3L6.5 3.2V5Z" fill="#cfcfcf"/></svg>
<svg class="a" style="left:573.3px;top:55px" width="5.6" height="5.6" viewBox="0 0 7 7"><circle cx="3.5" cy="3.5" r="2.9" stroke="#d0d0d0" stroke-width="0.9" fill="none"/><path d="M1.5 5.5L5.5 1.5A2.8 2.8 0 0 1 1.5 5.5Z" fill="#d0d0d0"/></svg>
<svg class="a" style="left:585px;top:55px" width="5.6" height="5" viewBox="0 0 6 5.5"><path d="M0.3 0.4H5.7V1.5H3.6V5.2H2.4V1.5H0.3Z" fill="#d0d0d0"/><rect x="1.4" y="4.6" width="3.2" height="0.7" fill="#d0d0d0"/></svg>
<svg class="a" style="left:596px;top:55px" width="6" height="5.4" viewBox="0 0 6 5.4"><rect x="0.9" y="0.7" width="4.2" height="4" fill="none" stroke="#cccccc" stroke-width="0.7"/><rect x="0" y="0" width="1.5" height="1.5" fill="#ccc"/><rect x="4.5" y="3.9" width="1.5" height="1.5" fill="#ccc"/></svg>
<svg class="a" style="left:607px;top:54.8px" width="6.2" height="6" viewBox="0 0 8 8"><path d="M2 0.7H5.5L7.3 2.5V7.3H2Z" fill="none" stroke="#ccc" stroke-width="0.9"/><circle cx="2.6" cy="5.4" r="2.2" fill="#ddd"/></svg>
<div class="a" style="left:618.2px;top:53px;width:3.6px;height:3.6px;background:#e8e8e8;border-radius:50%"></div>
<div class="a" style="left:619px;top:57.5px;width:2px;height:4px;background:#3f3f3f"></div>
<!-- normal row -->
<div class="a" style="left:516.8px;top:66px;width:58.7px;height:8.7px;background:#454545;border:0.7px solid #3e3e3e"></div>
<div class="t" style="left:519.5px;top:67.5px;color:#d8d8d8">Normal</div>
<svg class="a" style="left:570px;top:69.5px" width="4" height="3" viewBox="0 0 4 3"><path d="M0.3 0.5L2 2.3L3.7 0.5" stroke="#aaa" stroke-width="0.5" fill="none"/></svg>
<div class="t" style="left:579px;top:67px;color:#bbb">Opacity:</div>
<div class="a" style="left:599.2px;top:66px;width:15.5px;height:8.7px;background:#454545"></div>
<div class="t" style="left:601px;top:67px;color:#d8d8d8">100%</div>
<div class="a" style="left:616.2px;top:66px;width:5.4px;height:8.7px;background:#454545"></div>
<svg class="a" style="left:617px;top:69.5px" width="4" height="3" viewBox="0 0 4 3"><path d="M0.3 0.5L2 2.3L3.7 0.5" stroke="#aaa" stroke-width="0.5" fill="none"/></svg>
<!-- lock row -->
<div class="t" style="left:517px;top:80.8px;color:#bbb">Lock:</div>
<svg class="a" style="left:532px;top:80px" width="7" height="7" viewBox="0 0 7 7"><rect x="0.5" y="0.5" width="6" height="6" fill="none" stroke="#ccc" stroke-width="0.6"/><rect x="1.5" y="1.5" width="2" height="2" fill="#ccc"/><rect x="3.5" y="3.5" width="2" height="2" fill="#ccc"/></svg>
<svg class="a" style="left:542.8px;top:80px" width="6.4" height="6.6" viewBox="0 0 6.4 6.6"><path d="M6 0.4L3 3.6" stroke="#d0d0d0" stroke-width="0.9"/><path d="M3.3 3.2L1.6 4.4L0.5 6.2L2.4 5.2Z" fill="#d8d8d8" stroke="#d8d8d8" stroke-width="0.6"/></svg>
<svg class="a" style="left:552px;top:80px" width="7" height="7" viewBox="0 0 8 8"><path d="M4 0.5V7.5M0.5 4H7.5M3 1.5L4 0.5L5 1.5M3 6.5L4 7.5L5 6.5M1.5 3L0.5 4L1.5 5M6.5 3L7.5 4L6.5 5" stroke="#ccc" stroke-width="0.6" fill="none"/></svg>
<svg class="a" style="left:562.5px;top:80.5px" width="7" height="6" viewBox="0 0 8 7"><rect x="1" y="1.5" width="6" height="4.5" fill="none" stroke="#ccc" stroke-width="0.6"/><path d="M0.5 1.5H2M6 6H7.5" stroke="#ccc" stroke-width="0.8"/></svg>
<svg class="a" style="left:573.7px;top:79.8px" width="5.6" height="6.6" viewBox="0 0 5.6 6.6"><path d="M1.4 3V2.1A1.4 1.4 0 0 1 4.2 2.1V3" stroke="#d4d4d4" stroke-width="0.9" fill="none"/><rect x="0.4" y="2.9" width="4.8" height="3.5" rx="0.4" fill="#d4d4d4"/><rect x="2.5" y="4" width="0.7" height="1.2" fill="#666"/></svg>
<div class="t" style="left:589.5px;top:80.8px;color:#bbb">Fill:</div>
<div class="a" style="left:599.2px;top:79.5px;width:15.5px;height:8.7px;background:#454545"></div>
<div class="t" style="left:601px;top:80.5px;color:#d8d8d8">100%</div>
<div class="a" style="left:616.2px;top:79.5px;width:5.4px;height:8.7px;background:#454545"></div>
<svg class="a" style="left:617px;top:83px" width="4" height="3" viewBox="0 0 4 3"><path d="M0.3 0.5L2 2.3L3.7 0.5" stroke="#aaa" stroke-width="0.5" fill="none"/></svg>
<!-- layer row -->
<div class="a" style="left:528.3px;top:90.5px;width:88.7px;height:19.2px;background:#696969"></div>
<svg class="a" style="left:518px;top:98.5px" width="7" height="5" viewBox="0 0 7 5"><path d="M0.3 2.5C1.5 0.8 5.5 0.8 6.7 2.5C5.5 4.2 1.5 4.2 0.3 2.5Z" stroke="#ddd" stroke-width="0.7" fill="none"/><circle cx="3.5" cy="2.5" r="1" fill="#ddd"/></svg>
<div class="a" style="left:530.6px;top:92.8px;width:14.4px;height:14.8px;background:#fff"></div>
<svg class="a" style="left:530.6px;top:92.8px" width="14.4" height="14.8" viewBox="0 0 14.4 14.8"><defs><linearGradient id="th1" x1="3" y1="10" x2="11" y2="4" gradientUnits="userSpaceOnUse"><stop offset="0" stop-color="#ff5a2e"/><stop offset="1" stop-color="#ffa010"/></linearGradient></defs><path d="M3.2 10.8C3 7 6.2 4 11 3.6C10.9 7.5 7.6 10.5 3.2 10.8Z" fill="url(#th1)"/></svg>
<svg class="a" style="left:546.7px;top:96.5px" width="3.5" height="8" viewBox="0 0 3.5 8"><rect x="0.5" y="0.4" width="2.5" height="3.4" rx="1.2" fill="none" stroke="#b8b8b8" stroke-width="0.7"/><rect x="0.5" y="4.2" width="2.5" height="3.4" rx="1.2" fill="none" stroke="#b8b8b8" stroke-width="0.7"/></svg>
<div class="a" style="left:551.2px;top:91.2px;width:16.5px;height:17.3px;background:#000;border:0.8px solid #a8a8a8"></div>
<svg class="a" style="left:552px;top:92px" width="15" height="15.7" viewBox="0 0 15 15.7"><path d="M3.6 10.6C3.6 7.6 6.6 5.1 10.8 5C10.3 8.2 7.4 10.3 3.6 10.6Z" fill="#f4f4f4"/></svg>
<div class="t" style="left:571.2px;top:98px;color:#e0e0e0">Layer 0</div>
<!-- layers footer -->
<div class="a" style="left:514.3px;top:110px;width:102.7px;height:139.5px;background:#4f4f4f"></div>
<div class="a" style="left:514.3px;top:109.3px;width:102.7px;height:0.7px;background:#4a4a4a"></div>
<div class="a" style="left:514.3px;top:250px;width:110px;height:11px;background:#545454"></div>
<div class="a" style="left:514.3px;top:249.5px;width:110px;height:0.8px;background:#474747"></div>
<svg class="a" style="left:530px;top:253.5px" width="7" height="4" viewBox="0 0 7 4"><rect x="0.4" y="0.6" width="3" height="2.8" rx="1.3" fill="none" stroke="#8a8a8a" stroke-width="0.6"/><rect x="3.6" y="0.6" width="3" height="2.8" rx="1.3" fill="none" stroke="#8a8a8a" stroke-width="0.6"/></svg>
<div class="t" style="left:543px;top:251.5px;font-size:6px;line-height:7px;font-style:italic;font-family:'Liberation Serif',serif;color:#ccc">fx</div>
<svg class="a" style="left:555.3px;top:253.2px" width="6.2" height="4.6" viewBox="0 0 8 6"><rect width="8" height="6" fill="#e0e0e0"/><circle cx="4" cy="3" r="1.7" fill="#444"/></svg>
<svg class="a" style="left:568.3px;top:252.6px" width="5.8" height="5.8" viewBox="0 0 7 7"><circle cx="3.5" cy="3.5" r="2.8" stroke="#e0e0e0" stroke-width="0.9" fill="none"/><path d="M1.5 5.5L5.5 1.5A2.8 2.8 0 0 1 1.5 5.5Z" fill="#e0e0e0"/></svg>
<div class="a" style="left:573px;top:257.8px;width:1.2px;height:1.2px;background:#ccc"></div>
<svg class="a" style="left:580.4px;top:253.3px" width="6.2" height="4.6" viewBox="0 0 8 6"><path d="M0 0.3H3L3.8 1.1H8V6H0Z" fill="#e0e0e0"/></svg>
<svg class="a" style="left:593.3px;top:252.6px" width="5.8" height="5.8" viewBox="0 0 7 7"><rect x="0.5" y="0.5" width="6" height="6" fill="none" stroke="#e0e0e0" stroke-width="0.9"/><path d="M3.5 1.6V5.4M1.6 3.5H5.4" stroke="#e0e0e0" stroke-width="1.1"/></svg>
<svg class="a" style="left:606.2px;top:252.3px" width="5" height="6.4" viewBox="0 0 6 7"><rect x="0.3" y="1" width="5.4" height="0.8" fill="#ccc"/><rect x="1" y="2.2" width="4" height="4.5" fill="#bbb"/><rect x="2" y="0.2" width="2" height="0.8" fill="#ccc"/></svg>
<!-- separator between panels -->
<div class="a" style="left:514.3px;top:261px;width:110px;height:2px;background:#3c3c3c"></div>
<!-- paths tab bar -->
<div class="a" style="left:514.3px;top:263px;width:110px;height:12.6px;background:#434343"></div>
<div class="a" style="left:514.6px;top:263px;width:20.1px;height:12.6px;background:#535353"></div>
<div class="t" style="left:518px;top:265px;font-weight:bold;color:#e8e8e8">Paths</div>
<div class="a" style="left:616.8px;top:267.5px;width:5px;height:3.5px;background:#8c8c8c"></div>
<div class="a" style="left:617px;top:275.6px;width:7px;height:141.4px;background:#4d4d4d"></div>
<div class="a" style="left:514.3px;top:275.6px;width:102.7px;height:141.4px;background:#4f4f4f"></div>
<div class="a" style="left:617px;top:110px;width:7px;height:139.5px;background:#4d4d4d"></div>
<!-- outer frame -->
<div class="a" style="left:1px;top:1px;width:623px;height:0.8px;background:#3e3e3e"></div>
<div class="a" style="left:1px;top:1px;width:0.8px;height:416px;background:#3a3a3a"></div>
<div class="a" style="left:0;top:0;width:624px;height:1px;background:#f2f2f2"></div>
<div class="a" style="left:0;top:0;width:1px;height:417px;background:#f2f2f2"></div>
</div></body></html>
